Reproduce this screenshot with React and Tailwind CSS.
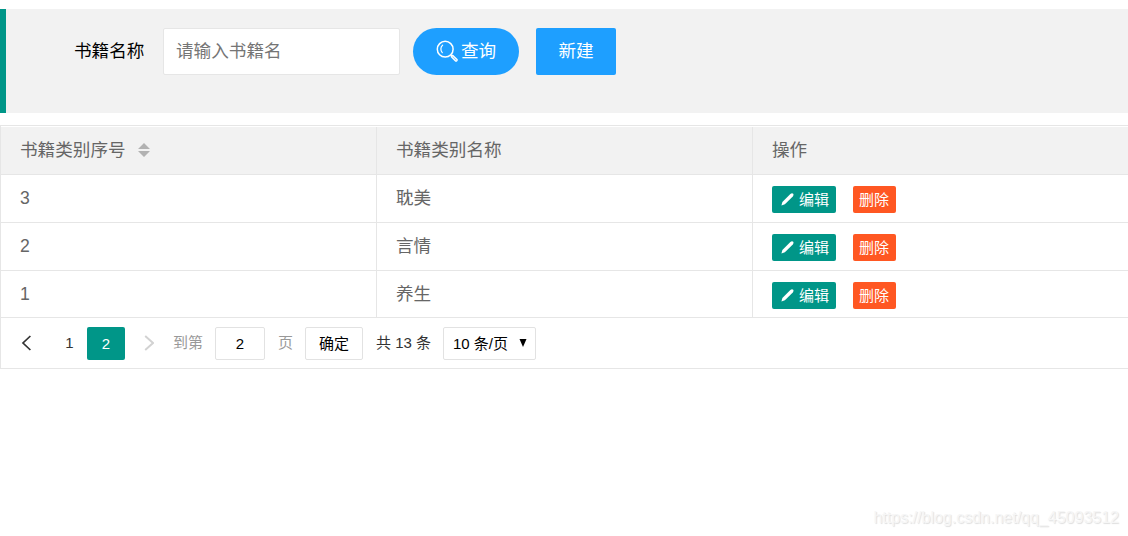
import { useState } from "react";

const books = [
  { id: 3, name: "耽美", height: "h-12" },
  { id: 2, name: "言情", height: "h-12" },
  { id: 1, name: "养生", height: "h-[47px]" },
];

function SearchIcon() {
  return (
    <svg className="w-[22px] h-[22px] shrink-0" viewBox="0 0 22 22" fill="none" stroke="currentColor">
      <circle cx="9.2" cy="9.2" r="7.9" strokeWidth="1.5" />
      <path d="M6.6 5.2C4.4 6.8 4.3 10.6 6.3 12.6" strokeWidth="1.2" strokeLinecap="round" />
      <path d="M14.6 14.8l1.6 1.5" strokeWidth="1.5" />
      <path d="M16.6 15.3l4.2 3.9a1 1 0 0 1-1.5 1.5l-4-4z" strokeWidth="1.3" fill="currentColor" fillOpacity="0.4" />
    </svg>
  );
}

function EditIcon() {
  return (
    <svg className="w-[13px] h-[13px] shrink-0" viewBox="0 0 13 13" fill="currentColor">
      <path d="M0.4 12.6l1-3.6L9.4 1.1Q11-.2 12.2.8 13 2 11.8 3.5L3.9 11.3z" />
    </svg>
  );
}

function SearchBar() {
  const [name, setName] = useState("");

  return (
    <div className="mt-[9px] h-[104px] border-l-[6px] border-[#009688] bg-[#f2f2f2] pt-[19px] flex items-start">
      <label htmlFor="name" className="ml-[68px] w-[89px] h-[47px] leading-[46px] text-black">
        书籍名称
      </label>
      <input
        id="name"
        type="text"
        className="w-[237px] h-[47px] pl-3 border border-[#e6e6e6] rounded-xs bg-white placeholder:text-[#757575] outline-none"
        placeholder="请输入书籍名"
        value={name}
        onChange={(e) => setName(e.target.value)}
      />
      <button className="ml-[13px] w-[106px] h-[47px] pl-[23px] pb-px rounded-full bg-[#1e9fff] text-white flex items-center gap-[3px]">
        <SearchIcon />
        <span>查询</span>
      </button>
      <button className="ml-[17px] w-20 h-[47px] pb-px rounded-xs bg-[#1e9fff] text-white">
        新建
      </button>
    </div>
  );
}

function BookRow({ book }) {
  return (
    <div className={"grid grid-cols-[376px_376px_1fr] border-b border-[#e6e6e6] leading-[46px] " + book.height}>
      <div className="pl-[19px] border-r border-[#e6e6e6]">{book.id}</div>
      <div className="pl-[19px] border-r border-[#e6e6e6]">{book.name}</div>
      <div className="pl-[19px] pt-[11px] flex items-start text-[15px] leading-[27px] text-white">
        <button className="w-16 h-[27px] pl-[9px] rounded-xs bg-[#009688] flex items-center gap-[5px]">
          <EditIcon />
          编辑
        </button>
        <button className="ml-[17px] w-[43px] h-[27px] pr-px rounded-xs bg-[#ff5722]">删除</button>
      </div>
    </div>
  );
}

function Pagination() {
  const [page, setPage] = useState("2");

  return (
    <div className="h-[51px] pt-[9px] border-b border-[#e6e6e6] flex items-start text-[15px] leading-[32px] text-[#333]">
      <button className="ml-5 w-[10px] h-8">
        <svg className="w-[10px] h-4" viewBox="0 0 10 16" fill="none" stroke="#333" strokeWidth="1.7">
          <path d="M9.4 1L2 8l7.4 7" />
        </svg>
      </button>
      <button className="ml-[26px] w-[25px] h-8">1</button>
      <button className="ml-[5px] w-[38px] h-[33px] rounded-xs bg-[#009688] text-white">2</button>
      <button className="ml-[19px] w-[10px] h-8">
        <svg className="w-[10px] h-4" viewBox="0 0 10 16" fill="none" stroke="#d2d2d2" strokeWidth="1.9">
          <path d="M1.2 1L9 8l-7.8 7" />
        </svg>
      </button>
      <span className="ml-[19px] w-[42px] text-[#999]">到第</span>
      <input
        className="w-[50px] h-[33px] border border-[#e2e2e2] rounded-xs text-center text-black outline-none"
        value={page}
        onChange={(e) => setPage(e.target.value)}
      />
      <span className="ml-[13px] w-[27px] text-[#999]">页</span>
      <button className="w-[58px] h-[33px] border border-[#e2e2e2] rounded-xs text-black">确定</button>
      <span className="ml-[13px] w-[67px] whitespace-nowrap">共 13 条</span>
      <button className="w-[93px] h-[33px] pt-px pl-[9px] pr-2 border border-[#e2e2e2] rounded-xs text-black flex items-center justify-between whitespace-nowrap">
        10 条/页
        <svg className="w-2 h-2 mb-0.5" viewBox="0 0 8 8">
          <path d="M0.5 0h7L4 8z" />
        </svg>
      </button>
    </div>
  );
}

export default function App() {
  return (
    <div className="h-[536px] overflow-hidden bg-white flex flex-col font-['Liberation_Sans','Noto_Sans_CJK_SC',sans-serif] text-[17.6px]">
      <SearchBar />
      <div className="mt-3 border-t border-l border-[#e6e6e6] text-[#666]">
        <div className="mt-px h-12 grid grid-cols-[376px_376px_1fr] border-b border-[#e6e6e6] bg-[#f2f2f2] leading-[46px]">
          <div className="pl-[19px] border-r border-[#e6e6e6] flex">
            书籍类别序号
            <svg className="ml-3 mt-4 w-3 h-[14px]" viewBox="0 0 12 14" fill="#b2b2b2">
              <path d="M0 6L6 0l6 6zM0 8h12l-6 6z" />
            </svg>
          </div>
          <div className="pl-[19px] border-r border-[#e6e6e6]">书籍类别名称</div>
          <div className="pl-[19px]">操作</div>
        </div>
        {books.map((book) => (
          <BookRow key={book.id} book={book} />
        ))}
        <Pagination />
      </div>
      <div className="mt-auto mb-[6px] pr-[9px] text-right text-base leading-6 text-[#f6f6f6] [text-shadow:1px_1px_1px_#dedede]">
        https://blog.csdn.net/qq_45093512
      </div>
    </div>
  );
}
